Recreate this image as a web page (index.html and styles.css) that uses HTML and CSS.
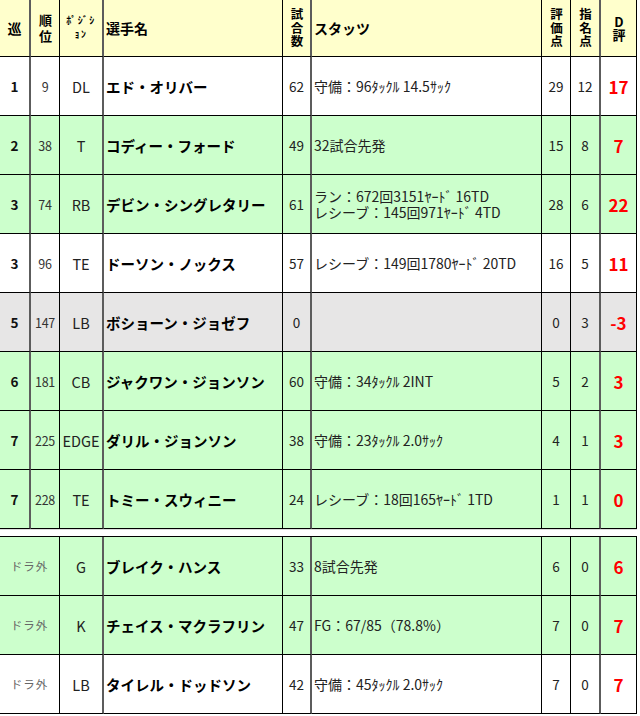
FILE: index.html
```html
<!DOCTYPE html>
<html lang="ja">
<head>
<meta charset="utf-8">
<link rel="stylesheet" href="styles.css">
</head>
<body>
<div class="sheet">
  <div class="row head">
    <div class="c tk"><span>巡</span></div>
    <div class="c"><span class="tate two">順位</span></div>
    <div class="c tk pos-h"><span>ﾎﾟｼﾞｼ<br>ｮﾝ</span></div>
    <div class="c left"><span>選手名</span></div>
    <div class="c tk"><span class="tate three">試合数</span></div>
    <div class="c left"><span>スタッツ</span></div>
    <div class="c"><span class="tate three">評価点</span></div>
    <div class="c tk"><span class="tate three">指名点</span></div>
    <div class="c"><span class="tate dh">D評</span></div>
  </div>

  <div class="row white">
    <div class="c tk rd">1</div><div class="c rk">9</div><div class="c tk ps">DL</div>
    <div class="c left nm">エド・オリバー</div><div class="c tk num">62</div>
    <div class="c left st"><span>守備：96ﾀｯｸﾙ 14.5ｻｯｸ</span></div>
    <div class="c num">29</div><div class="c tk num">12</div><div class="c de">17</div>
  </div>
  <div class="row green">
    <div class="c tk rd">2</div><div class="c rk">38</div><div class="c tk ps">T</div>
    <div class="c left nm">コディー・フォード</div><div class="c tk num">49</div>
    <div class="c left st"><span>32試合先発</span></div>
    <div class="c num">15</div><div class="c tk num">8</div><div class="c de">7</div>
  </div>
  <div class="row green">
    <div class="c tk rd">3</div><div class="c rk">74</div><div class="c tk ps">RB</div>
    <div class="c left nm">デビン・シングレタリー</div><div class="c tk num">61</div>
    <div class="c left st"><div class="lines"><span class="ln">ラン：672回3151ﾔｰﾄﾞ 16TD</span><span class="ln">レシーブ：145回971ﾔｰﾄﾞ 4TD</span></div></div>
    <div class="c num">28</div><div class="c tk num">6</div><div class="c de">22</div>
  </div>
  <div class="row white">
    <div class="c tk rd">3</div><div class="c rk">96</div><div class="c tk ps">TE</div>
    <div class="c left nm">ドーソン・ノックス</div><div class="c tk num">57</div>
    <div class="c left st"><span>レシーブ：149回1780ﾔｰﾄﾞ 20TD</span></div>
    <div class="c num">16</div><div class="c tk num">5</div><div class="c de">11</div>
  </div>
  <div class="row gray">
    <div class="c tk rd">5</div><div class="c rk">147</div><div class="c tk ps">LB</div>
    <div class="c left nm">ボショーン・ジョゼフ</div><div class="c tk num">0</div>
    <div class="c left st"></div>
    <div class="c num">0</div><div class="c tk num">3</div><div class="c de">-3</div>
  </div>
  <div class="row green">
    <div class="c tk rd">6</div><div class="c rk">181</div><div class="c tk ps">CB</div>
    <div class="c left nm">ジャクワン・ジョンソン</div><div class="c tk num">60</div>
    <div class="c left st"><span>守備：34ﾀｯｸﾙ 2INT</span></div>
    <div class="c num">5</div><div class="c tk num">2</div><div class="c de">3</div>
  </div>
  <div class="row green">
    <div class="c tk rd">7</div><div class="c rk">225</div><div class="c tk ps">EDGE</div>
    <div class="c left nm">ダリル・ジョンソン</div><div class="c tk num">38</div>
    <div class="c left st"><span>守備：23ﾀｯｸﾙ 2.0ｻｯｸ</span></div>
    <div class="c num">4</div><div class="c tk num">1</div><div class="c de">3</div>
  </div>
  <div class="row green">
    <div class="c tk rd">7</div><div class="c rk">228</div><div class="c tk ps">TE</div>
    <div class="c left nm">トミー・スウィニー</div><div class="c tk num">24</div>
    <div class="c left st"><span>レシーブ：18回165ﾔｰﾄﾞ 1TD</span></div>
    <div class="c num">1</div><div class="c tk num">1</div><div class="c de">0</div>
  </div>
</div>

<div class="gap"></div>

<div class="sheet lower">
  <div class="row green">
    <div class="c span2 ud">ドラ外</div><div class="c tk ps">G</div>
    <div class="c left nm">ブレイク・ハンス</div><div class="c tk num">33</div>
    <div class="c left st"><span>8試合先発</span></div>
    <div class="c num">6</div><div class="c tk num">0</div><div class="c de">6</div>
  </div>
  <div class="row green">
    <div class="c span2 ud">ドラ外</div><div class="c tk ps">K</div>
    <div class="c left nm">チェイス・マクラフリン</div><div class="c tk num">47</div>
    <div class="c left st"><span>FG：67/85（78.8%）</span></div>
    <div class="c num">7</div><div class="c tk num">0</div><div class="c de">7</div>
  </div>
  <div class="row white">
    <div class="c span2 ud">ドラ外</div><div class="c tk ps">LB</div>
    <div class="c left nm">タイレル・ドッドソン</div><div class="c tk num">42</div>
    <div class="c left st"><span>守備：45ﾀｯｸﾙ 2.0ｻｯｸ</span></div>
    <div class="c num">7</div><div class="c tk num">0</div><div class="c de">7</div>
  </div>
</div>
</body>
</html>
```

FILE: styles.css
```css
html, body {
  margin: 0;
  padding: 0;
  background: #ffffff;
}

body {
  font-family: "Noto Sans CJK JP", "Noto Sans", sans-serif;
  color: #222222;
}

.sheet {
  width: 637px;
}

.lower {
  border-top: 1px solid #000000;
}

.gap {
  height: 6px;
  width: 637px;
  border-top: 1px solid #dcdcdc;
}

.row {
  display: grid;
  grid-template-columns: 31px 29px 44px 179px 29px 230px 29px 30px 36px;
  height: 59px;
}

.row.head {
  height: 57px;
  background: #ffffcc;
  font-weight: bold;
  font-size: 14px;
  color: #000000;
  line-height: 16px;
}

.white { background: #ffffff; }
.green { background: #ccffcc; }
.gray { background: #e7e6e6; }

.c {
  box-sizing: border-box;
  border-right: 1px solid #000000;
  border-bottom: 1px solid #000000;
  display: flex;
  align-items: center;
  justify-content: center;
  text-align: center;
  white-space: nowrap;
  overflow: hidden;
}

.c > span {
  display: block;
}

.c.tk {
  border-right: 2px solid #5c5c5c;
}

.c.left {
  justify-content: flex-start;
  text-align: left;
  padding-left: 2px;
}

.tate {
  writing-mode: vertical-rl;
  text-orientation: upright;
}

.tate.three {
  font-size: 12.5px;
  letter-spacing: 1px;
  padding-top: 1px;
}

.tate.two {
  font-size: 13px;
  letter-spacing: 3px;
  padding-top: 3px;
}

.tate.dh {
  font-size: 13px;
  letter-spacing: 0px;
  padding-top: 1px;
}

.row.head .pos-h {
  font-size: 10px;
  line-height: 14px;
  letter-spacing: 1.5px;
  padding-bottom: 3px;
}

.span2 {
  grid-column: span 2;
}

.rd {
  font-weight: bold;
  font-size: 13.5px;
  color: #111111;
}

.rk {
  font-size: 12.5px;
  color: #333333;
  letter-spacing: -0.3px;
}

.ps {
  font-size: 14.5px;
  color: #222222;
}

.nm {
  font-weight: bold;
  font-size: 14.5px;
  color: #000000;
}

.num {
  font-size: 13.5px;
  color: #222222;
}

.st {
  font-size: 14px;
  line-height: 16px;
  color: #222222;
}

.lines {
  display: flex;
  flex-direction: column;
}

.ln {
  display: block;
  height: 16px;
  line-height: 16px;
}

.de {
  font-weight: bold;
  font-size: 17px;
  color: #ff0000;
}

.ud {
  font-size: 11.5px;
  color: #666666;
  letter-spacing: 1px;
}
```
